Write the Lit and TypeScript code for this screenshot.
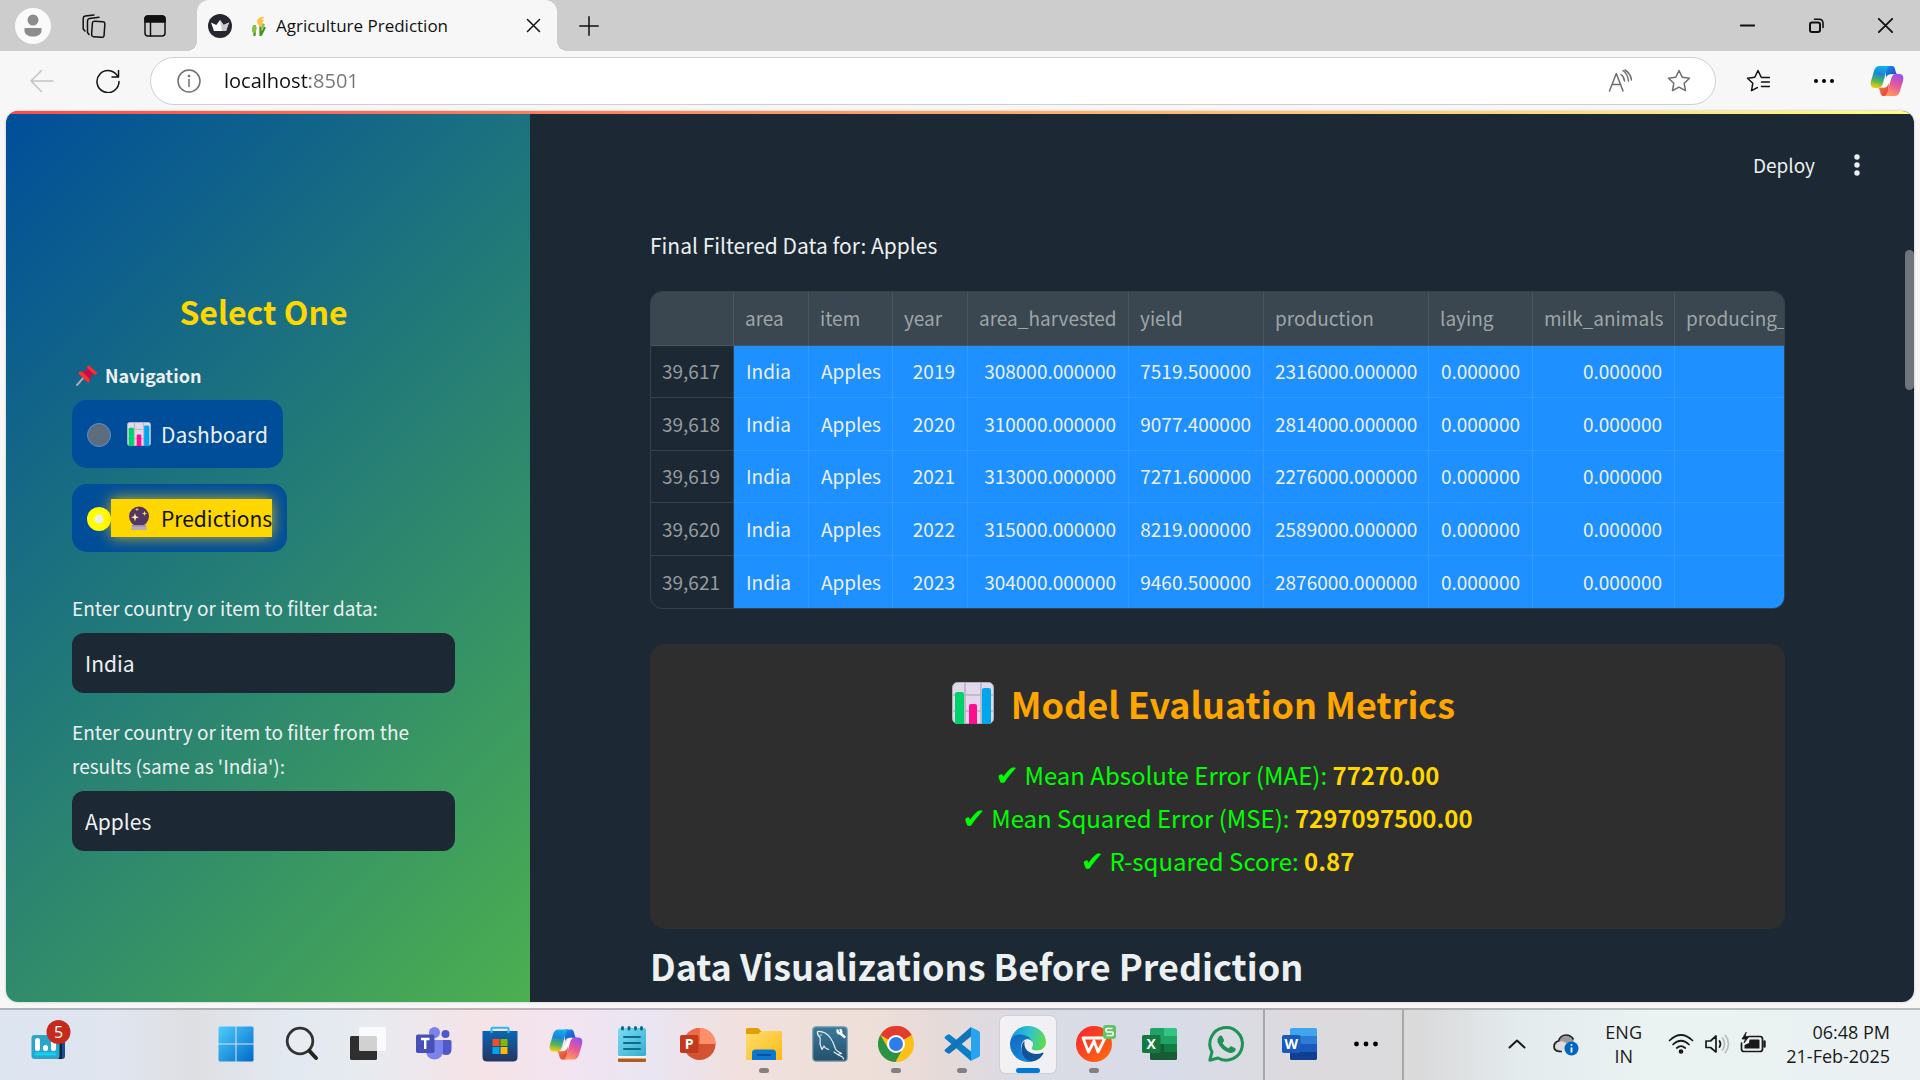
import { LitElement, html, css, svg, nothing } from "lit";
import { customElement, property, state } from "lit/decorators.js";

/* ---------- shared drawings ---------- */

const chartEmoji = (cls: string) => html`<svg class=${cls} viewBox="0 0 42 42" aria-hidden="true">
  <rect x="0.5" y="0.5" width="41" height="41" rx="5" fill="#e1d8ec" stroke="#b4acbc" />
  <path d="M13 1V41M29 1V41M1 13H41M1 29H41" stroke="#b9b1c1" stroke-width="1.6" />
  <path d="M3 12q0-2 2-2h5q2 0 2 2v30H5q-2 0-2-2z" fill="#00d26a" />
  <path d="M17 24q0-2 2-2h4q2 0 2 2v18h-8z" fill="#ff0d8f" />
  <path d="M30 8q0-2 2-2h5q2 0 2 2v32q0 2-2 2h-7z" fill="#00a6ed" />
</svg>`;

const crystalEmoji = (cls: string) => html`<svg class=${cls} viewBox="0 0 24 24" aria-hidden="true">
  <circle cx="12" cy="10.5" r="10" fill="#533566" />
  <path d="M5 19h14l1 5H4z" fill="#b4acbc" />
  <path d="M5 19h14l.3 1.5H4.7z" fill="#998ea4" />
  <path d="M8 7l1 3.200 3.200 1-3.200 1L8 15.500l-1-3.300-3.200-1 3.200-1zM17.500 5l.7 1.800 1.800.7-1.800.7-.7 1.800-.7-1.800-1.800-.7 1.800-.7zM10 1.500l.5 1.500 1.500.5-1.500.5L10 5.500 9.500 4 8 3.500 9.500 3z" fill="#fcd53f" />
  <path d="M8 8.500l.7 2 2 .7-2 .7-.7 2-.7-2-2-.7 2-.7z" fill="#f3eef8" />
</svg>`;

const pinEmoji = (cls: string) => html`<svg class=${cls} viewBox="0 0 22 22" aria-hidden="true">
  <path d="M9 12L1 21" stroke="#b4acbc" stroke-width="2" stroke-linecap="round" />
  <path d="M13.500 3.500L18.500 8.500 13.500 15.500 6 8.500z" fill="#ca0b4a" />
  <path d="M12.200 1q1-1 2.200 0l7 6.700q1 1 0 2-1.500 1-3-.4L12.600 4q-1.700-1.600-.4-3z" fill="#f8312f" />
  <path d="M3 7.500q2.500-1.500 5 .8l5.500 5.500q2 2.300.6 4.400-1 1-2 0L3 9.500q-1-1 0-2z" fill="#f8312f" />
</svg>`;

const copilotMark = (cls: string, id: string) => html`<svg class=${cls} viewBox="0 0 34 30" aria-hidden="true">
  <defs>
    <linearGradient id="${id}a" x1="0.500" y1="0" x2="0.300" y2="1">
      <stop offset="0" stop-color="#13aef0" /><stop offset=".35" stop-color="#1687d8" />
      <stop offset=".68" stop-color="#53b457" /><stop offset="1" stop-color="#f5cf0c" />
    </linearGradient>
    <linearGradient id="${id}b" x1="0.700" y1="0" x2="0.300" y2="1">
      <stop offset="0" stop-color="#9a50f0" /><stop offset=".45" stop-color="#e6569b" />
      <stop offset="1" stop-color="#ff9a5c" />
    </linearGradient>
    <linearGradient id="${id}c" x1="0" y1="0" x2="1" y2="1">
      <stop offset="0" stop-color="#1592e8" /><stop offset="1" stop-color="#1e35c0" />
    </linearGradient>
    <linearGradient id="${id}d" x1="0" y1="0" x2="1" y2="1">
      <stop offset="0" stop-color="#ff8a3c" /><stop offset="1" stop-color="#e03a3e" />
    </linearGradient>
  </defs>
  <path d="M12 22L21 8h3l-8 17z" fill="#fff" />
  <path d="M16 0h6c2.500 0 3 2.500 3.500 5 .4 2 1 3.300 3 3.300h-7C18 8.300 17 9.500 16 12z" fill="url(#${id}c)" />
  <path d="M18 30h-4.500c-2.500 0-3-2.500-3.500-5-.4-2-1-3.300-3-3.300h6.500c3 0 4.500-2 5.500-5z" fill="url(#${id}d)" />
  <path d="M9.500 0H20c-2 0-3 2.500-4 6l-3 11c-1 3.500-2.500 5-5 5H4.500C1 22 0 19 1 15L4 5C5 1.500 6.500 0 9.500 0z" fill="url(#${id}a)" />
  <path d="M24.500 30H14c2 0 3-2.500 4-6l3-11c1-3.500 2.500-5 5-5h3.500C33 8 34 11 33 15l-3 10c-1 3.500-2.500 5-5.500 5z" fill="url(#${id}b)" />
</svg>`;

const line = (cls: string, box: number, body: unknown) => html`<svg
  class=${cls} viewBox="0 0 ${box} ${box}" fill="none" stroke="currentColor"
  stroke-width="1.500" stroke-linecap="round" stroke-linejoin="round" aria-hidden="true">${body}</svg>`;

const STAR = "M12 1.500l3.200 6.700 7.300 1-5.300 5.100 1.300 7.300L12 18.100l-6.500 3.500 1.300-7.300L1.500 9.200l7.300-1z";

/* ---------- browser frame ---------- */

@customElement("browser-bar")
class BrowserBar extends LitElement {
  static styles = css`
    :host { display: block; font-family: "Open Sans", "Noto Sans", sans-serif; color: #111; }
    button { border: 0; padding: 0; background: none; color: inherit; display: grid; place-items: center; }
    .strip { display: flex; align-items: stretch; height: 51px; background: #cdcdcd; padding-left: 15px; }
    .tools { display: flex; align-items: center; gap: 25px; padding-right: 24px; }
    .tool { width: 36px; height: 36px; }
    .avatar { border-radius: 50%; background: #fafafa; }
    .i20 { width: 20px; height: 20px; }
    .i24 { width: 24px; height: 24px; }
    .i15 { width: 15px; height: 15px; }
    .tab { display: flex; align-items: center; width: 360px; box-sizing: border-box; padding: 0 12px 0 11px;
      background: #f7f7f7; border-radius: 12px 12px 0 0; position: relative; }
    .tab::before, .tab::after { content: ""; position: absolute; bottom: 0; width: 10px; height: 10px; }
    .tab::before { left: -10px; background: radial-gradient(circle at 0 0, #cdcdcd 10px, #f7f7f7 10px); }
    .tab::after { right: -10px; background: radial-gradient(circle at 100% 0, #cdcdcd 10px, #f7f7f7 10px); }
    .wheat { width: 14px; height: 20px; margin: 0 10px 0 20px; }
    .title { flex: 1; font-size: 17px; line-height: 24px; white-space: nowrap; }
    .new { width: 64px; }
    .window { display: flex; margin-left: auto; }
    .window button { width: 69px; }
    .bar { display: flex; align-items: center; gap: 18px; height: 60px; padding: 0 12px 0 18px; background: #f7f7f7; }
    .nav { width: 48px; height: 48px; }
    .last { width: 42px; }
    .faded { color: #c4c4c4; }
    .address { flex: 1; display: flex; align-items: center; box-sizing: border-box; height: 48px; padding: 0 24px 0 26px;
      background: #fff; border: 1px solid #cfcfcf; border-radius: 24px; color: #6e6e6e; }
    .url { flex: 1; min-width: 0; border: 0; padding: 0; margin: 0 23px; font: 20px/28px "Open Sans", sans-serif;
      background: linear-gradient(90deg, #111 86px, #767676 86px); background-clip: text; -webkit-background-clip: text;
      color: transparent; outline: none; }
    .actions { display: flex; gap: 35px; }
    .copilot { width: 34px; height: 30px; }
  `;

  render() {
    return html`
      <header>
        <div class="strip">
          <div class="tools">
            <button class="tool avatar" aria-label="Profile">
              <svg class="i24" viewBox="0 0 24 24" fill="#8c8c8c"><circle cx="12" cy="6" r="5.500" /><path d="M3.500 14h17v2.500c0 4-4 6-8.500 6s-8.500-2-8.500-6z" /></svg>
            </button>
            <button class="tool" aria-label="Workspaces">
              ${line("i24", 24, svg`<rect x="10" y="7.500" width="12.500" height="15.500" rx="2" transform="rotate(4 16 15)" /><path d="M7 20.500L5.500 18.500V7q0-2 2-2.400L17 3.300M3 17L1.200 15V4.500q0-2 2-2.400L12 .9" />`)}
            </button>
            <button class="tool" aria-label="Vertical tabs">
              ${line("i24", 24, svg`<rect x="2" y="2" width="20" height="20" rx="3" /><path d="M2 8V5q0-3 3-3h14q3 0 3 3v3z" fill="currentColor" /><path d="M7.500 8V22" />`)}
            </button>
          </div>
          <div class="tab">
            <svg class="i24" viewBox="0 0 24 24"><circle cx="12" cy="12" r="12" fill="#262730" /><path d="M3 8.500l5.300 2.500L12 6l3.700 5L21 8.500 18 17H6z" fill="#fff" /><path d="M12 6l3.700 5L21 8.500 18 17H14z" fill="#c9cace" /></svg>
            <svg class="wheat" viewBox="0 0 14 20"><path d="M2.500 20V9M8.500 20V5M1 12l2 6M13 11l-4 8" stroke="#44911b" stroke-width="2.200" fill="none" /><path d="M5 4q3-4 7-3-1 3-3 3 3 0 3 0-1 3-3 3 2 0 3 0-1 4-4 4-3-2-3-7z" fill="#ffc24b" /><path d="M10 8q2 0 3 0-1 4-3 5zM0 11l3-2 2 3-2 5-3-1z" fill="#86c442" /></svg>
            <span class="title">Agriculture Prediction</span>
            <button class="i24" aria-label="Close tab">${line("i15", 15, svg`<path d="M1.500 1.500l12 12M13.500 1.500l-12 12" />`)}</button>
          </div>
          <button class="new" aria-label="New tab">${line("i20", 20, svg`<path d="M10 .8V19.200M.8 10H19.200" />`)}</button>
          <div class="window">
            <button aria-label="Minimize">${line("i15", 15, svg`<path d="M.8 7.500H14.200" stroke-width="2" />`)}</button>
            <button aria-label="Restore">${line("i15", 15, svg`<rect x="1" y="4.500" width="10" height="9.500" rx="2" stroke-width="2" /><path d="M5.500 1.200H10q4 0 4 4V9.500" stroke-width="1.600" />`)}</button>
            <button aria-label="Close">${line("i15", 15, svg`<path d="M.8 .8l13.400 13.400M14.200 .8L.8 14.200" stroke-width="1.800" />`)}</button>
          </div>
        </div>
        <div class="bar">
          <button class="nav faded" aria-label="Back">${line("i24", 24, svg`<path d="M23 12H1M11.500 1.500L1 12l10.500 10.500" />`)}</button>
          <button class="nav" aria-label="Refresh">${line("i24", 24, svg`<path d="M22.500 1.500V8H16M22 8A11 11 0 1 0 23 12.500" />`)}</button>
          <div class="address">
            ${line("i24", 24, svg`<circle cx="12" cy="12" r="11" /><path d="M12 10.500v7" /><circle cx="12" cy="7" r=".6" fill="currentColor" />`)}
            <input class="url" type="text" aria-label="Address" .value=${"localhost:8501"} />
            <div class="actions">
              <button class="i24" aria-label="Read aloud">${line("i24", 24, svg`<path d="M1.500 22L8.300 4.500 15 22M4 15.500h8.800M15 1.500q4.500 3 5.500 10.500M13 5.500q3 2 3.500 6.500M17 1q5.500 3.500 6.500 10" />`)}</button>
              <button class="i24" aria-label="Add to favorites">${line("i24", 24, svg`<path d=${STAR} />`)}</button>
            </div>
          </div>
          <button class="nav" aria-label="Favorites">${line("i24", 24, svg`<path d="M17 8.500l-1.800-.3L12 1.500 8.800 8.200 1.500 9.200l5.300 5.100-1.300 7.300 5.800-3M15.500 8.500H23.500M15.500 13H23.500M15.500 17.500H23.500" />`)}</button>
          <button class="nav" aria-label="Settings and more"><svg class="i24" viewBox="0 0 24 24"><circle cx="4" cy="12" r="2" /><circle cx="12" cy="12" r="2" /><circle cx="20" cy="12" r="2" /></svg></button>
          <button class="nav last" aria-label="Copilot">${copilotMark("copilot", "bar")}</button>
        </div>
      </header>
    `;
  }
}

/* ---------- sidebar ---------- */

@customElement("filter-sidebar")
class FilterSidebar extends LitElement {
  @state() private page = "Predictions";

  static styles = css`
    :host { display: block; background: linear-gradient(135deg, #004e9a, #4caf50); color: #ecf0f1; }
    .inner { padding: 178px 75px 0 66px; }
    .heading { margin: 0 0 25px; font-size: 32px; line-height: 44px; font-weight: 700; color: #ffd700; text-align: center; }
    .group { border: 0; margin: 0 0 39px; padding: 0; display: flex; flex-direction: column; align-items: flex-start; gap: 16px; }
    .legend { display: flex; align-items: center; gap: 8px; padding: 0 0 8px 4px; font-size: 18px; line-height: 34px; font-weight: 700; }
    .pin { width: 21px; height: 21px; }
    .option { display: flex; align-items: center; box-sizing: border-box; height: 68px; padding: 0 15px; background: #004d99; border-radius: 15px; }
    .dot { appearance: none; box-sizing: border-box; width: 24px; height: 24px; margin: 2px 0 0; border-radius: 50%;
      background: #5d6d7e; border: 1px solid #5b8fce; }
    .dot:checked { border: 0; background: radial-gradient(circle, #ecf0f1 4px, #ffff00 5px); }
    .choice { display: flex; align-items: center; gap: 10px; padding-left: 16px; font-size: 21px; line-height: 38px; }
    .dot:checked + .choice { background: #ffd700; color: #111; box-shadow: 0 0 15px rgba(255, 215, 0, 0.8); }
    .emoji { width: 24px; height: 24px; }
    .label { display: block; margin-bottom: 8px; font-size: 19px; line-height: 34px; }
    .field { display: block; width: 100%; box-sizing: border-box; height: 60px; margin-bottom: 22px; padding: 0 13px; border: 0;
      border-radius: 12px; background: #1c2833; color: #ecf0f1; font: inherit; font-size: 21px; outline: none; }
  `;

  private option(name: string, icon: unknown) {
    return html`<label class="option">
      <input class="dot" type="radio" name="page" .value=${name} .checked=${this.page === name} @change=${() => (this.page = name)} />
      <span class="choice">${icon}${name}</span>
    </label>`;
  }

  render() {
    return html`<div class="inner">
      <h2 class="heading">Select One</h2>
      <fieldset class="group">
        <legend class="legend">${pinEmoji("pin")}Navigation</legend>
        ${this.option("Dashboard", chartEmoji("emoji"))}
        ${this.option("Predictions", crystalEmoji("emoji"))}
      </fieldset>
      <label class="label" for="source">Enter country or item to filter data:</label>
      <input class="field" id="source" type="text" value="India" />
      <label class="label" for="result">Enter country or item to filter from the results (same as 'India'):</label>
      <input class="field" id="result" type="text" value="Apples" />
    </div>`;
  }
}

/* ---------- data grid ---------- */

const COLUMNS = [
  { name: "", width: 83 }, { name: "area", width: 75 }, { name: "item", width: 84 },
  { name: "year", width: 75 }, { name: "area_harvested", width: 161 }, { name: "yield", width: 135 },
  { name: "production", width: 165 }, { name: "laying", width: 104 }, { name: "milk_animals", width: 142 },
  { name: "producing_", width: 240 },
];
const ROWS = [
  ["39,617", "India", "Apples", "2019", "308000.000000", "7519.500000", "2316000.000000", "0.000000", "0.000000", ""],
  ["39,618", "India", "Apples", "2020", "310000.000000", "9077.400000", "2814000.000000", "0.000000", "0.000000", ""],
  ["39,619", "India", "Apples", "2021", "313000.000000", "7271.600000", "2276000.000000", "0.000000", "0.000000", ""],
  ["39,620", "India", "Apples", "2022", "315000.000000", "8219.000000", "2589000.000000", "0.000000", "0.000000", ""],
  ["39,621", "India", "Apples", "2023", "304000.000000", "9460.500000", "2876000.000000", "0.000000", "0.000000", ""],
];

@customElement("data-grid")
class DataGrid extends LitElement {
  static styles = css`
    :host { display: block; overflow: hidden; border: 1px solid #36424c; border-radius: 12px; }
    table { table-layout: fixed; width: 0; border-collapse: separate; border-spacing: 0; font-size: 19px; line-height: 28px; }
    th, td { box-sizing: border-box; padding: 0 12px 1px 11px; font-weight: 400; white-space: nowrap; text-align: right; }
    thead th { height: 54px; background: #3a4650; color: #9fa5a8; text-align: left; border-right: 1px solid #4a555e; border-bottom: 1px solid #4a555e; }
    tbody th { height: 52px; color: #969b9f; padding-right: 13px; border-right: 1px solid #36424c; border-bottom: 1px solid #36424c; }
    td { height: 52px; background: #1e90ff; color: #ecf0f1; border-right: 1px solid #3499fc; border-bottom: 1px solid #3499fc; }
    tbody tr:nth-child(even) > * { height: 53px; }
    tbody tr:last-child > * { border-bottom: 0; }
    .text { padding-left: 12px; text-align: left; }
  `;

  render() {
    return html`<table>
      <colgroup>${COLUMNS.map((c) => html`<col style="width:${c.width}px" />`)}</colgroup>
      <thead><tr>${COLUMNS.map((c) => html`<th scope="col">${c.name}</th>`)}</tr></thead>
      <tbody>${ROWS.map((r) => html`<tr>
        <th scope="row">${r[0]}</th>
        ${r.slice(1).map((v, i) => html`<td class=${i < 2 ? "text" : nothing}>${v}</td>`)}
      </tr>`)}</tbody>
    </table>`;
  }
}

/* ---------- main pane ---------- */

const METRICS = [
  ["Mean Absolute Error (MAE):", "77270.00"],
  ["Mean Squared Error (MSE):", "7297097500.00"],
  ["R-squared Score:", "0.87"],
];

@customElement("prediction-view")
class PredictionView extends LitElement {
  static styles = css`
    :host { display: block; position: relative; min-width: 0; background: #1c2833; color: #ecf0f1; }
    .top { position: absolute; top: 30px; right: 41px; display: flex; align-items: center; gap: 26px; }
    .deploy, .menu { border: 0; padding: 0; background: none; color: inherit; font: inherit; font-size: 19px; line-height: 46px; }
    .menu { display: grid; place-items: center; width: 32px; height: 48px; }
    .kebab { width: 6px; height: 22px; }
    .thumb { position: absolute; top: 139px; right: 0; width: 9px; height: 140px; border-radius: 5px; background: #6f757c; }
    .body { padding: 115px 129px 0 120px; }
    .caption { margin: 0 0 27px; font-size: 21px; line-height: 38px; }
    .card { margin: 35px 0 11px; padding: 34px 20px 47px; border-radius: 15px; background: #2e2e2e; text-align: center; }
    .title { display: flex; justify-content: center; align-items: center; gap: 17px; margin: 0 0 25px; padding-right: 28px; font-size: 36px; line-height: 50px; font-weight: 700; color: #ffa500; }
    .emoji { width: 42px; height: 42px; }
    .metric { margin: 0; font-size: 24px; line-height: 43px; color: #00ff00; }
    .tick { font-family: "DejaVu Sans", sans-serif; font-size: 28px; line-height: 24px; }
    .value { color: #ffd700; font-weight: 700; }
    .section { margin: 0; font-size: 36px; line-height: 50px; font-weight: 700; white-space: nowrap; }
  `;

  render() {
    return html`
      <div class="body">
        <p class="caption">Final Filtered Data for: Apples</p>
        <data-grid></data-grid>
        <section class="card">
          <h2 class="title">${chartEmoji("emoji")}Model Evaluation Metrics</h2>
          ${METRICS.map(([k, v]) => html`<p class="metric"><span class="tick">✔</span> ${k} <b class="value">${v}</b></p>`)}
        </section>
        <h2 class="section">Data Visualizations Before Prediction</h2>
      </div>
      <div class="top">
        <button class="deploy">Deploy</button>
        <button class="menu" aria-label="Main menu">
          <svg class="kebab" viewBox="0 0 6 22" fill="#ecf0f1"><circle cx="3" cy="3" r="2.700" /><circle cx="3" cy="11" r="2.700" /><circle cx="3" cy="19" r="2.700" /></svg>
        </button>
      </div>
      <div class="thumb"></div>
    `;
  }
}

/* ---------- taskbar ---------- */

const office = (letter: string, tile: string, body: unknown) => svg`${body}
  <rect x="0" y="9" width="18.500" height="18" rx="1.800" fill=${tile} />
  <text x="9.200" y="23" text-anchor="middle" font-family="Open Sans, sans-serif" font-size="14" font-weight="700" fill="#fff">${letter}</text>`;

const APPS: { name: string; run?: boolean; active?: boolean; art: unknown }[] = [
  { name: "Start", art: svg`<defs><linearGradient id="win" gradientUnits="userSpaceOnUse" x1="0" y1="0" x2="36" y2="36"><stop offset="0" stop-color="#4fd0ff" /><stop offset="1" stop-color="#0067c8" /></linearGradient></defs>
      <path d="M0.500 2q0-1.500 1.500-1.500H17.500V17.500H.5zM18.500 .5H34q1.500 0 1.500 1.500V17.500H18.500zM.5 18.500H17.500V35.500H2Q.5 35.500 .5 34zM18.500 18.500H35.500V34q0 1.500-1.500 1.500H18.500z" fill="url(#win)" />` },
  { name: "Search", art: svg`<circle cx="16" cy="15" r="12.800" fill="#e9edf1" stroke="#333" stroke-width="2.800" /><path d="M25.500 25L32 32" stroke="#222" stroke-width="4" stroke-linecap="round" />` },
  { name: "Task view", art: svg`<rect x="0" y="10" width="27" height="24" rx="1.500" fill="#2f2f2f" /><rect x="9" y="1" width="27" height="24" rx="1.500" fill="#fff" opacity=".78" />` },
  { name: "Teams", art: svg`<circle cx="29.500" cy="8" r="4" fill="#5059c9" /><path d="M25 14h9q1.500 0 1.500 1.500V23q0 6-5.500 6-4 0-5-3z" fill="#5059c9" />
      <circle cx="18.500" cy="6.500" r="5.500" fill="#7b83eb" /><path d="M10 14h17V24q0 9-8.500 9.500Q10 33 10 24z" fill="#7b83eb" />
      <rect x="0" y="8.500" width="18.500" height="18.500" rx="1.800" fill="#4650b8" /><path d="M5 13H13.500M9.200 13V23" stroke="#fff" stroke-width="2.400" />` },
  { name: "Microsoft Store", art: svg`<defs><linearGradient id="sto" x1="0" y1="0" x2="0" y2="1"><stop offset="0" stop-color="#0a66b5" /><stop offset="1" stop-color="#25345f" /></linearGradient></defs>
      <path d="M.5 5H35.500V31q0 4.500-4.500 4.500H5Q.5 35.500 .5 31z" fill="url(#sto)" /><path d="M9.500 7V2.500q0-.8.800-.8H25.700q.8 0 .8.800V7" fill="none" stroke="#2bb8f5" stroke-width="2" />
      <rect x="10.500" y="13" width="7" height="7" fill="#f25022" /><rect x="18.500" y="13" width="7" height="7" fill="#7fba00" /><rect x="10.500" y="21" width="7" height="7" fill="#00a4ef" /><rect x="18.500" y="21" width="7" height="7" fill="#ffb900" />` },
  { name: "Copilot", art: null },
  { name: "Notepad", art: svg`<rect x="4" y="29" width="28" height="7" rx="1" fill="#b55a1c" /><rect x="4" y="28" width="28" height="4.500" fill="#f4f4f4" />
      <defs><linearGradient id="npd" x1="0" y1="0" x2="1" y2="1"><stop offset="0" stop-color="#7ddcf2" /><stop offset="1" stop-color="#35aed0" /></linearGradient></defs>
      <rect x="4" y="2" width="28" height="28" rx="1.500" fill="url(#npd)" /><path d="M10 11H26M10 17H26M10 23H26" stroke="#0b6c8c" stroke-width="2" stroke-linecap="round" />
      <path d="M8.500 1.500V3M15 1.500V3M21.500 1.500V3M27.500 1.500V3" stroke="#0b6c8c" stroke-width="3" stroke-linecap="round" />` },
  { name: "PowerPoint", art: office("P", "#c23a1d", svg`<circle cx="19.500" cy="18" r="16" fill="#d35230" /><path d="M19.500 2V18H35.500A16 16 0 0 0 19.500 2z" fill="#ff8f6b" /><path d="M19.500 2V18H3.500A16 16 0 0 1 19.500 2z" fill="#ed6c47" />`) },
  { name: "File Explorer", run: true, art: svg`<defs><linearGradient id="fol" x1="0" y1="0" x2="1" y2="1"><stop offset="0" stop-color="#ffdf6e" /><stop offset="1" stop-color="#fbb813" /></linearGradient></defs>
      <path d="M0 3.500Q0 2 1.500 2H11q1.500 0 2.500 1.200L15.500 5.500H0z M0 5h16l-3 3H0z" fill="#e0a100" /><path d="M0 8H12L15.500 5H34.500Q36 5 36 6.500V34H0z" fill="url(#fol)" />
      <path d="M6 34V27q0-3.500 3.500-3.500H26.500Q30 23.500 30 27v7z" fill="#0b78cf" /><path d="M11 29H25" stroke="#0a4f94" stroke-width="1.800" />` },
  { name: "MySQL Workbench", art: svg`<defs><linearGradient id="sql" x1="0" y1="0" x2="0" y2="1"><stop offset="0" stop-color="#3a7a9c" /><stop offset="1" stop-color="#23506c" /></linearGradient></defs>
      <rect x=".8" y=".8" width="34.400" height="34.400" rx="3.500" fill="url(#sql)" stroke="#7d99aa" stroke-width="1.200" />
      <path d="M5.500 5.500C11 5 15.500 8 18.500 12c3 4 4 8 5 11 1.500 2.500 3.500 3 6 4.500l-4 1 5 2.500 1 2M5.500 5.500c-.5 2.500 1 4.500 2.500 6 1 3-1 5 .5 8l1.500 4 2-3.500 1.500 2 3 1.500M22 26l3 2" fill="none" stroke="#e8f0f4" stroke-width="1.200" stroke-linejoin="round" stroke-linecap="round" />
      <circle cx="9" cy="9" r=".8" fill="#e8f0f4" />
      <path d="M28 7l4.500 4M25.500 4.500q0 3 3 3 1.500-2 0-3.500" stroke="#fff" stroke-width="2.400" stroke-linecap="round" fill="none" />` },
  { name: "Chrome", run: true, art: svg`<circle cx="18" cy="18" r="18" fill="#fbc116" /><path d="M18 18L2.400 9A18 18 0 0 1 33.600 9z" fill="#e33b2e" /><path d="M18 9H33.600A18 18 0 0 0 18 0z" fill="#e33b2e" />
      <path d="M2.400 9L10.200 22.500 18 27 25 22 17.500 36A18 18 0 0 1 2.400 9z" fill="#2a9147" /><circle cx="18" cy="18" r="9" fill="#fff" /><circle cx="18" cy="18" r="7" fill="#2f7de9" />` },
  { name: "Visual Studio Code", run: true, art: svg`<path d="M1 10.500l3-2q1-.6 2 .2L27 25.500V35L1 12.500q-1-1 0-2z" fill="#0a7fc8" /><path d="M1 25.500l3 2q1 .6 2-.2L27 10.500V1L1 23.500q-1 1 0 2z" fill="#1173b8" /><path d="M25.500 .5L34 4.500q2 1 2 2.500V29q0 1.500-2 2.500L25.500 35.500Q27 35 27 33V3Q27 1 25.500 .5z" fill="#27a3f0" />` },
  { name: "Edge", run: true, active: true, art: svg`<defs><linearGradient id="eda" x1="0" y1="0.300" x2="1" y2="0.500"><stop offset="0" stop-color="#1c94dc" /><stop offset=".5" stop-color="#2fc3cf" /><stop offset="1" stop-color="#5fdc4c" /></linearGradient>
      <linearGradient id="edb" x1="0" y1="0" x2="0.500" y2="1"><stop offset="0" stop-color="#1168b8" /><stop offset="1" stop-color="#1488dc" /></linearGradient></defs>
      <path d="M.5 14.500C2 6 9 0 18 0 28 0 36 7 36 16c0 5.500-4 8.500-9 8.500-3.500 0-6-1.300-5-3 3-5-1-8-4.500-8.500C10 11.500 4 11 .5 14.500z" fill="url(#eda)" />
      <path d="M0 18C0 11 5 8.500 10 8.500c7 0 12 4 12 8.500 0-2-2-4-4.500-4C14 13 11 17 11 22c0 7 5 12 10 13.700A18 18 0 0 1 0 18z" fill="url(#edb)" />
      <path d="M14.500 15C9 20 10.500 33 21 35.700 27 35 31 32 33.500 27.500q.3-1.200-1-.8C24 30 13 26.500 14.500 15z" fill="#11529c" />` },
  { name: "WPS Office", run: true, art: svg`<defs><linearGradient id="wps" x1="0" y1="0" x2="1" y2="1"><stop offset="0" stop-color="#f5222d" /><stop offset="1" stop-color="#ff6f0f" /></linearGradient></defs><circle cx="18" cy="18" r="18" fill="url(#wps)" />
      <path d="M7 12H16.500M7 12l5.500 14L18 15l4 11 7-14H18" fill="none" stroke="#fff" stroke-width="2.800" stroke-linejoin="round" stroke-linecap="round" />
      <rect x="27" y="-1" width="13" height="14" rx="3" fill="#5ec564" /><path d="M36.500 2.500H31q-1 0-1 1V5q0 1 1 1H36q1 0 1 1V8.500q0 1-1 1H30.500" fill="none" stroke="#fff" stroke-width="1.600" />` },
  { name: "Excel", art: office("X", "#127a41", svg`<path d="M8 3.500Q8 2 9.500 2H22V18H8z" fill="#21a366" /><path d="M22 2H33.500Q35 2 35 3.500V10H22z" fill="#33c481" /><path d="M22 10H35V18H22z" fill="#21a366" /><path d="M8 18H22V34H9.500Q8 34 8 32.500z" fill="#185c37" /><path d="M22 18H35V26H22z" fill="#107c41" /><path d="M22 26H35V32.500Q35 34 33.500 34H22z" fill="#185c37" />`) },
  { name: "WhatsApp", art: svg`<path d="M1.800 34.200L4 26A16.300 16.300 0 1 1 10 32z" fill="none" stroke="#1f9254" stroke-width="3" stroke-linejoin="round" /><path d="M11 10.500q1.500-1.800 3-.6l2 4q.3 1-.5 1.800l-1 1.300q2 4 6 5.500l1.500-1.700q.7-.8 1.800-.3l3.500 1.800q1 1-.3 3-2.500 2.500-6 1.400Q13 24 9.500 16q-.5-3.500 1.500-5.500z" fill="#1f9254" />` },
];

const WORD = office("W", "#1a5abd", svg`<path d="M8 3.500Q8 2 9.500 2H33.500Q35 2 35 3.500V10H8z" fill="#41a5ee" /><path d="M8 10H35V18H8z" fill="#2b7cd3" /><path d="M8 18H35V26H8z" fill="#185abd" /><path d="M8 26H35V32.500Q35 34 33.500 34H9.500Q8 34 8 32.500z" fill="#103f91" />`);

@customElement("task-bar")
class TaskBar extends LitElement {
  @property() time = "06:48 PM";
  @property() date = "21-Feb-2025";

  static styles = css`
    :host { display: flex; align-items: stretch; height: 70px; border-top: 2px solid rgba(90, 90, 90, 0.35); color: #191919;
      font-family: "Open Sans", "Noto Sans", sans-serif; font-size: 18px; line-height: 24px;
      background: linear-gradient(90deg, #dde5f1 0, #e0e5ef 6%, #dedfe3 10%, #e3e9f1 15%, #e7ebf0 19%, #f5e3e7 25%, #f2e4f1 30%, #e9e5f2 34%, #f1e0df 38%, #eedfd8 45%, #e6dad9 49%, #dadbe4 53%, #d8dce8 61%, #dddade 68%, #dadadb 74%, #e4ebed 79%, #eaf2f2 86%, #ebf1f2 100%); }
    button { border: 0; padding: 0; background: none; color: inherit; font: inherit; }
    .widgets { width: 203px; padding-left: 31px; text-align: left; display: flex; align-items: center; }
    .widget { width: 37px; height: 40px; overflow: visible; margin-bottom: 10px; }
    .app { position: relative; width: 66px; display: grid; place-items: center; }
    .pic { position: relative; width: 36px; height: 36px; overflow: visible; margin-bottom: 2px; }
    .copilot { position: relative; width: 34px; height: 31px; margin-bottom: 2px; }
    .active::before { content: ""; position: absolute; inset: 6px 5px 7px; border-radius: 6px; background: rgba(255, 255, 255, 0.62); box-shadow: 0 0 1px 1px rgba(0, 0, 0, 0.06); }
    .run::after { content: ""; position: absolute; left: 50%; bottom: 7px; width: 10px; height: 5px; margin-left: -5px; border-radius: 3px; background: #857f80; }
    .active::after { width: 24px; margin-left: -12px; background: #0078d4; }
    .shelf { display: flex; margin-left: 4px; border: solid rgba(90, 90, 90, 0.4); border-width: 0 2px; padding: 0 3px 0 2px; }
    .tray { display: flex; align-items: center; margin-left: auto; padding: 0 30px 2px 0; }
    .chev { width: 24px; height: 24px; margin-right: 24px; }
    .cloud { width: 26px; height: 26px; margin-right: 26px; }
    .lang { text-align: center; margin-right: 26px; }
    .status { display: flex; gap: 10px; margin-right: 18px; }
    .stat { width: 26px; height: 26px; }
    .clock { text-align: right; min-width: 106px; }
    .row { display: block; white-space: nowrap; }
  `;

  render() {
    return html`
      <button class="widgets" aria-label="Widgets, 5 notifications">
        <svg class="widget" viewBox="0 0 37 40">
          <rect x="14" y="16" width="20" height="23" rx="3" fill="#1a4f96" /><path d="M28 18H31V39H28z" fill="#0a2038" />
          <rect x=".5" y="15" width="28" height="24" rx="3" fill="#2aa5cc" /><path d="M6.500 20.500V28.500M14.500 27.500v1M22.500 23v5.500" stroke="#fff" stroke-width="5" stroke-linecap="round" /><path d="M5 34H24" stroke="#0cd3f2" stroke-width="3" stroke-linecap="round" />
          <circle cx="27.500" cy="12" r="12" fill="#c42b1c" />
          <text x="27.500" y="17.500" text-anchor="middle" font-family="Open Sans, sans-serif" font-size="16" fill="#fff">5</text>
        </svg>
      </button>
      ${APPS.map((a) => html`<button class="app ${a.run ? "run" : ""} ${a.active ? "active" : ""}" aria-label=${a.name}>
        ${a.art ? html`<svg class="pic" viewBox="0 0 36 36">${a.art}</svg>` : copilotMark("copilot", "task")}
      </button>`)}
      <div class="shelf">
        <button class="app" aria-label="Word"><svg class="pic" viewBox="0 0 36 36">${WORD}</svg></button>
        <button class="app" aria-label="More apps"><svg class="pic" viewBox="0 0 36 36"><circle cx="8.500" cy="18" r="2.400" /><circle cx="18" cy="18" r="2.400" /><circle cx="27.500" cy="18" r="2.400" /></svg></button>
      </div>
      <div class="tray">
        <button class="chev" aria-label="Hidden icons">${line("", 24, svg`<path d="M4.500 15.500L12 8.500l7.500 7" stroke-width="2" />`)}</button>
        <svg class="cloud" viewBox="0 0 26 26"><path d="M6 20.500q-5-.5-5-5 0-4.500 4.500-5.500Q7.500 4 13 4q6 0 8 6" fill="#9a9a9a" /><path d="M5 11q5-2 8 1l7 3v4H6q-4-1-4-4z" fill="#dcdcdc" /><path d="M9 20.500H6q-5-.5-5-5 0-4.500 4.500-5.500Q7.500 4 13 4q5 0 7.500 4.500" fill="none" stroke="#222" stroke-width="1.700" /><circle cx="18.500" cy="17.500" r="7" fill="#0067c0" /><path d="M18.500 16.500v5M18.500 13.200v1.600" stroke="#fff" stroke-width="1.800" /></svg>
        <button class="lang"><span class="row">ENG</span><span class="row">IN</span></button>
        <div class="status">
          ${line("stat", 26, svg`<path d="M1.500 9.500q11.500-11 23 0M5 13.500q8-7.500 16 0M8.800 17q4.200-3.800 8.400 0" stroke-width="1.700" /><circle cx="13" cy="20.500" r="1.600" fill="currentColor" />`)}
          ${line("stat", 26, svg`<path d="M2 10h4.500L12 5V21L6.500 16.500H2z" stroke-width="1.700" /><path d="M15.500 10q2 3 0 6" stroke-width="1.700" /><path d="M18.500 7q4 6 0 12M21.500 4.500q6 8.500 0 17" stroke="#b9bdbd" stroke-width="1.700" />`)}
          ${line("stat", 26, svg`<path d="M9 5.500H20q2.500 0 2.500 2.500V18q0 2.500-2.500 2.500H4Q1.500 20.500 1.500 18V12" stroke-width="1.700" /><path d="M9.500 8.500H18.500Q19.500 8.500 19.500 9.500V17.500H4.500V14L9 12z" fill="currentColor" stroke="none" /><path d="M24.500 10.500v5" stroke-width="2.400" /><path d="M6 1.500L2 8H5.500L4 12 9 5.500H5.500z" fill="currentColor" stroke-width=".8" />`)}
        </div>
        <button class="clock"><span class="row">${this.time}</span><span class="row">${this.date}</span></button>
      </div>
    `;
  }
}

/* ---------- page ---------- */

@customElement("app-root")
class AppRoot extends LitElement {
  static styles = css`
    :host { display: flex; flex-direction: column; height: 100vh; background: #f7f7f7;
      font-family: "Noto Sans CJK SC", "Noto Sans", sans-serif; }
    .viewport { flex: 1; min-height: 0; box-sizing: border-box; padding: 0 6px 6px; }
    .app { position: relative; height: 100%; display: grid; grid-template-columns: 524px minmax(0, 1fr); overflow: hidden; border-radius: 12px;
      box-shadow: 0 0 2px 1px rgba(0, 0, 0, 0.1); }
    .deco { position: absolute; inset: 0 0 auto; height: 3px; background: linear-gradient(90deg, #ff4b4b, #fffd80); }
  `;

  render() {
    return html`
      <browser-bar></browser-bar>
      <div class="viewport">
        <main class="app">
          <filter-sidebar></filter-sidebar>
          <prediction-view></prediction-view>
          <div class="deco"></div>
        </main>
      </div>
      <task-bar></task-bar>
    `;
  }
}
